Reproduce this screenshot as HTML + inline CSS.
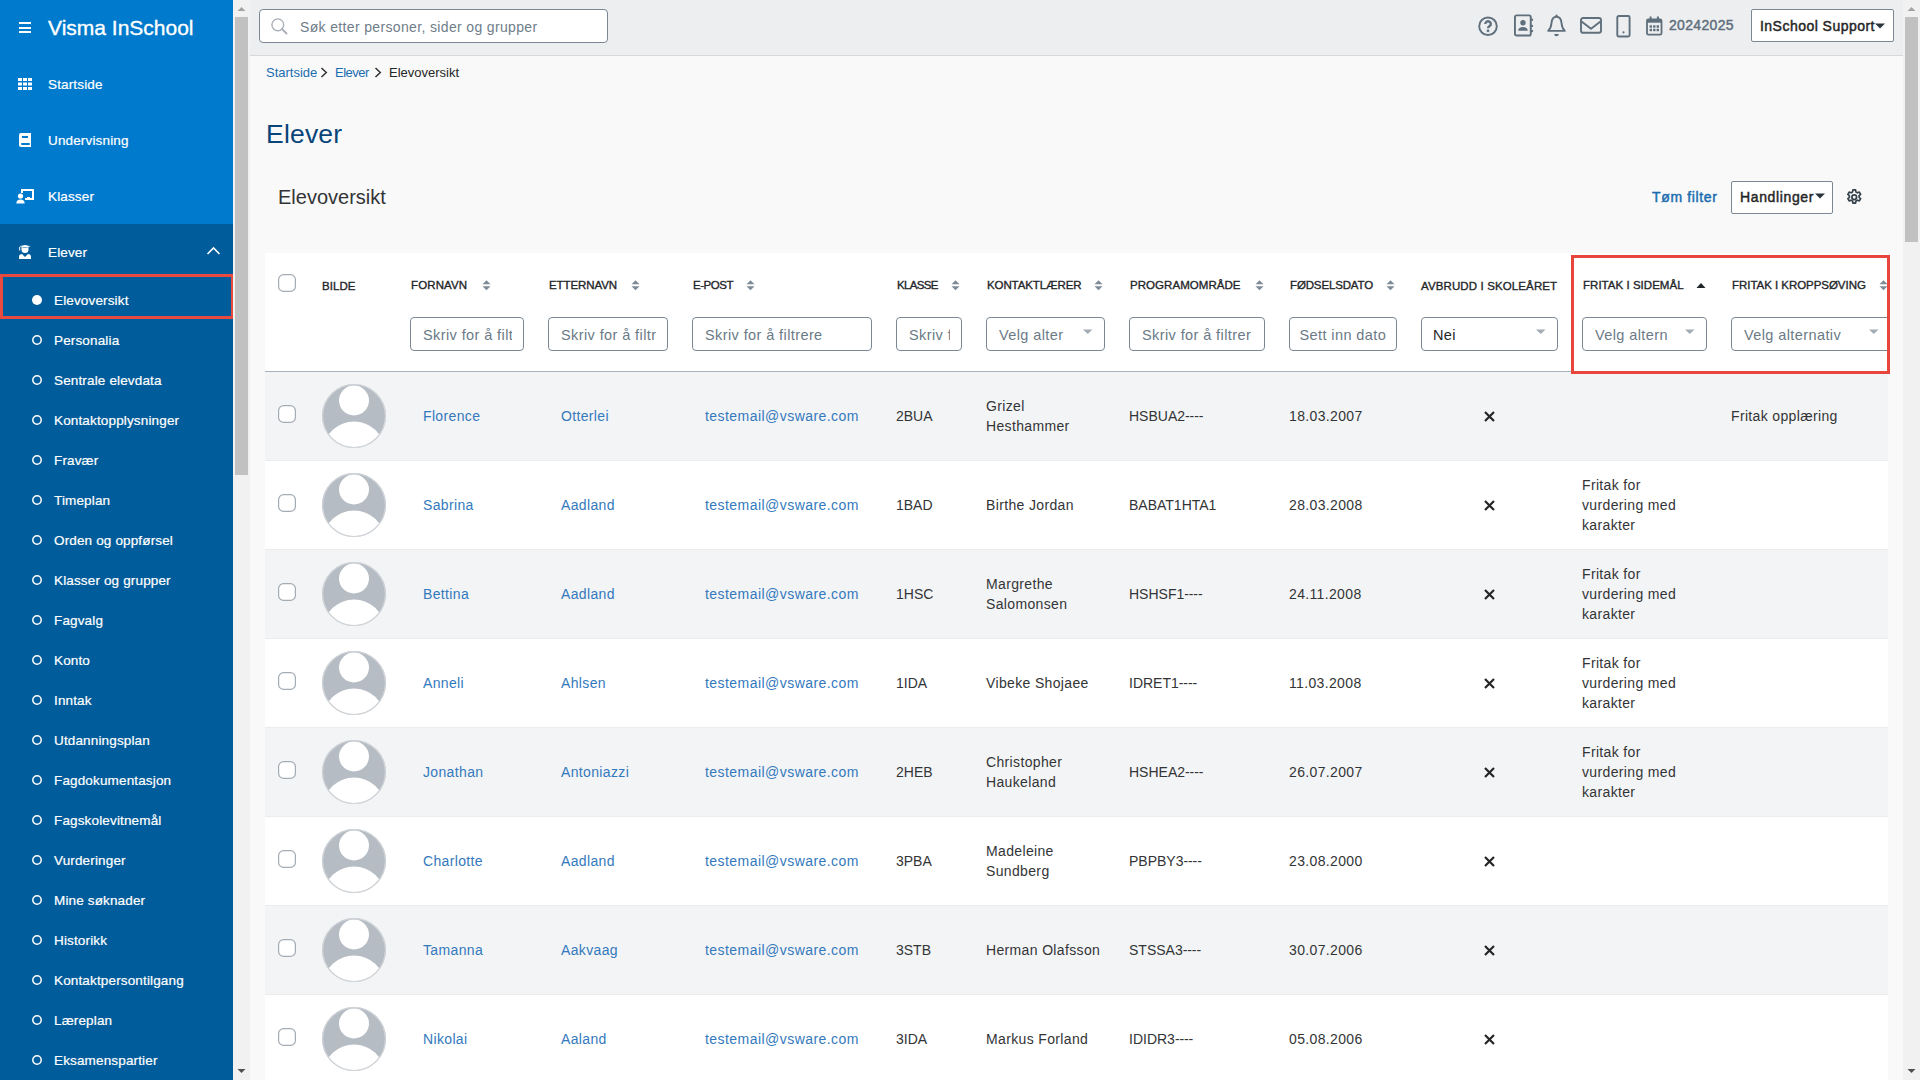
<!DOCTYPE html><html><head><meta charset="utf-8"><style>
*{margin:0;padding:0;box-sizing:border-box}
html,body{width:1920px;height:1080px;overflow:hidden;background:#f9f9f9;font-family:"Liberation Sans", sans-serif}
.t{position:absolute;white-space:nowrap;line-height:1}
.r{position:absolute}
svg{position:absolute;overflow:visible}
</style></head><body>
<div class="r" style="left:0px;top:0px;width:233px;height:224px;background:#007acc"></div>
<div class="r" style="left:0px;top:224px;width:233px;height:856px;background:#005c9a"></div>
<div class="r" style="left:19px;top:22px;width:12px;height:2px;background:#fff"></div>
<div class="r" style="left:19px;top:26.5px;width:12px;height:2px;background:#fff"></div>
<div class="r" style="left:19px;top:31px;width:12px;height:2px;background:#fff"></div>
<div class="t " style="left:48px;top:17.22px;font-size:21px;color:#fff;-webkit-text-stroke:0.35px #fff;">Visma InSchool</div>
<svg style="left:18px;top:78px" width="14" height="12" viewBox="0 0 14 12">
<g fill="#fff"><rect x="0" y="0" width="4" height="3"/><rect x="5" y="0" width="4" height="3"/><rect x="10" y="0" width="4" height="3"/>
<rect x="0" y="4.5" width="4" height="3"/><rect x="5" y="4.5" width="4" height="3"/><rect x="10" y="4.5" width="4" height="3"/>
<rect x="0" y="9" width="4" height="3"/><rect x="5" y="9" width="4" height="3"/><rect x="10" y="9" width="4" height="3"/></g></svg>
<svg style="left:19px;top:133px" width="12" height="14" viewBox="0 0 12 14">
<path d="M2 0H12V14H2A2 2 0 0 1 0 12V2A2 2 0 0 1 2 0Z" fill="#fff"/>
<rect x="3" y="3" width="6" height="2" fill="#007acc"/><rect x="2" y="10" width="9" height="2" rx="1" fill="#007acc"/></svg>
<svg style="left:16px;top:189px" width="18" height="15" viewBox="0 0 18 15">
<path d="M5 0H18V11H9V9H16V2H7V4H5Z" fill="#fff"/>
<rect x="11" y="8" width="3" height="2" fill="#fff"/>
<circle cx="4.5" cy="7" r="2.6" fill="#fff"/>
<path d="M0.3 14.5C0.3 12 2 10.5 4.5 10.5S8.7 12 8.7 14.5Z" fill="#fff"/></svg>
<svg style="left:19px;top:245px" width="12" height="14" viewBox="0 0 12 14">
<path d="M0 1.3L6 0L12 1.3L6 2.6Z" fill="#fff"/>
<path d="M2.5 2V4.5A3.5 3.5 0 0 0 9.5 4.5V2L6 3Z" fill="#fff"/>
<rect x="0.2" y="2" width="1" height="3.5" fill="#fff"/>
<path d="M0 14V11.5C0 10 1.5 9 3 9L6 12L9 9C10.5 9 12 10 12 11.5V14Z" fill="#fff"/></svg>
<div class="t " style="left:48px;top:77.57px;font-size:13.5px;color:#fff;-webkit-text-stroke:0.2px #fff;letter-spacing:0.15px;">Startside</div>
<div class="t " style="left:48px;top:133.57px;font-size:13.5px;color:#fff;-webkit-text-stroke:0.2px #fff;letter-spacing:0.15px;">Undervisning</div>
<div class="t " style="left:48px;top:189.57px;font-size:13.5px;color:#fff;-webkit-text-stroke:0.2px #fff;letter-spacing:0.15px;">Klasser</div>
<div class="t " style="left:48px;top:245.57px;font-size:13.5px;color:#fff;-webkit-text-stroke:0.2px #fff;letter-spacing:0.15px;">Elever</div>
<svg style="left:206px;top:246px" width="15" height="10" viewBox="0 0 15 10"><path d="M1.5 8L7.5 2L13.5 8" fill="none" stroke="#fff" stroke-width="1.6"/></svg>
<svg style="left:32px;top:295px" width="10" height="10"><circle cx="5" cy="5" r="5" fill="#fff"/></svg>
<div class="t " style="left:54px;top:293.57px;font-size:13.5px;color:#fff;-webkit-text-stroke:0.2px #fff;letter-spacing:0.15px;">Elevoversikt</div>
<svg style="left:32px;top:335px" width="10" height="10"><circle cx="5" cy="5" r="4.2" fill="none" stroke="#fff" stroke-width="1.5"/></svg>
<div class="t " style="left:54px;top:333.57px;font-size:13.5px;color:#fff;-webkit-text-stroke:0.2px #fff;letter-spacing:0.15px;">Personalia</div>
<svg style="left:32px;top:375px" width="10" height="10"><circle cx="5" cy="5" r="4.2" fill="none" stroke="#fff" stroke-width="1.5"/></svg>
<div class="t " style="left:54px;top:373.57px;font-size:13.5px;color:#fff;-webkit-text-stroke:0.2px #fff;letter-spacing:0.15px;">Sentrale elevdata</div>
<svg style="left:32px;top:415px" width="10" height="10"><circle cx="5" cy="5" r="4.2" fill="none" stroke="#fff" stroke-width="1.5"/></svg>
<div class="t " style="left:54px;top:413.57px;font-size:13.5px;color:#fff;-webkit-text-stroke:0.2px #fff;letter-spacing:0.15px;">Kontaktopplysninger</div>
<svg style="left:32px;top:455px" width="10" height="10"><circle cx="5" cy="5" r="4.2" fill="none" stroke="#fff" stroke-width="1.5"/></svg>
<div class="t " style="left:54px;top:453.57px;font-size:13.5px;color:#fff;-webkit-text-stroke:0.2px #fff;letter-spacing:0.15px;">Fravær</div>
<svg style="left:32px;top:495px" width="10" height="10"><circle cx="5" cy="5" r="4.2" fill="none" stroke="#fff" stroke-width="1.5"/></svg>
<div class="t " style="left:54px;top:493.57px;font-size:13.5px;color:#fff;-webkit-text-stroke:0.2px #fff;letter-spacing:0.15px;">Timeplan</div>
<svg style="left:32px;top:535px" width="10" height="10"><circle cx="5" cy="5" r="4.2" fill="none" stroke="#fff" stroke-width="1.5"/></svg>
<div class="t " style="left:54px;top:533.57px;font-size:13.5px;color:#fff;-webkit-text-stroke:0.2px #fff;letter-spacing:0.15px;">Orden og oppførsel</div>
<svg style="left:32px;top:575px" width="10" height="10"><circle cx="5" cy="5" r="4.2" fill="none" stroke="#fff" stroke-width="1.5"/></svg>
<div class="t " style="left:54px;top:573.57px;font-size:13.5px;color:#fff;-webkit-text-stroke:0.2px #fff;letter-spacing:0.15px;">Klasser og grupper</div>
<svg style="left:32px;top:615px" width="10" height="10"><circle cx="5" cy="5" r="4.2" fill="none" stroke="#fff" stroke-width="1.5"/></svg>
<div class="t " style="left:54px;top:613.57px;font-size:13.5px;color:#fff;-webkit-text-stroke:0.2px #fff;letter-spacing:0.15px;">Fagvalg</div>
<svg style="left:32px;top:655px" width="10" height="10"><circle cx="5" cy="5" r="4.2" fill="none" stroke="#fff" stroke-width="1.5"/></svg>
<div class="t " style="left:54px;top:653.57px;font-size:13.5px;color:#fff;-webkit-text-stroke:0.2px #fff;letter-spacing:0.15px;">Konto</div>
<svg style="left:32px;top:695px" width="10" height="10"><circle cx="5" cy="5" r="4.2" fill="none" stroke="#fff" stroke-width="1.5"/></svg>
<div class="t " style="left:54px;top:693.57px;font-size:13.5px;color:#fff;-webkit-text-stroke:0.2px #fff;letter-spacing:0.15px;">Inntak</div>
<svg style="left:32px;top:735px" width="10" height="10"><circle cx="5" cy="5" r="4.2" fill="none" stroke="#fff" stroke-width="1.5"/></svg>
<div class="t " style="left:54px;top:733.57px;font-size:13.5px;color:#fff;-webkit-text-stroke:0.2px #fff;letter-spacing:0.15px;">Utdanningsplan</div>
<svg style="left:32px;top:775px" width="10" height="10"><circle cx="5" cy="5" r="4.2" fill="none" stroke="#fff" stroke-width="1.5"/></svg>
<div class="t " style="left:54px;top:773.57px;font-size:13.5px;color:#fff;-webkit-text-stroke:0.2px #fff;letter-spacing:0.15px;">Fagdokumentasjon</div>
<svg style="left:32px;top:815px" width="10" height="10"><circle cx="5" cy="5" r="4.2" fill="none" stroke="#fff" stroke-width="1.5"/></svg>
<div class="t " style="left:54px;top:813.57px;font-size:13.5px;color:#fff;-webkit-text-stroke:0.2px #fff;letter-spacing:0.15px;">Fagskolevitnemål</div>
<svg style="left:32px;top:855px" width="10" height="10"><circle cx="5" cy="5" r="4.2" fill="none" stroke="#fff" stroke-width="1.5"/></svg>
<div class="t " style="left:54px;top:853.57px;font-size:13.5px;color:#fff;-webkit-text-stroke:0.2px #fff;letter-spacing:0.15px;">Vurderinger</div>
<svg style="left:32px;top:895px" width="10" height="10"><circle cx="5" cy="5" r="4.2" fill="none" stroke="#fff" stroke-width="1.5"/></svg>
<div class="t " style="left:54px;top:893.57px;font-size:13.5px;color:#fff;-webkit-text-stroke:0.2px #fff;letter-spacing:0.15px;">Mine søknader</div>
<svg style="left:32px;top:935px" width="10" height="10"><circle cx="5" cy="5" r="4.2" fill="none" stroke="#fff" stroke-width="1.5"/></svg>
<div class="t " style="left:54px;top:933.57px;font-size:13.5px;color:#fff;-webkit-text-stroke:0.2px #fff;letter-spacing:0.15px;">Historikk</div>
<svg style="left:32px;top:975px" width="10" height="10"><circle cx="5" cy="5" r="4.2" fill="none" stroke="#fff" stroke-width="1.5"/></svg>
<div class="t " style="left:54px;top:973.57px;font-size:13.5px;color:#fff;-webkit-text-stroke:0.2px #fff;letter-spacing:0.15px;">Kontaktpersontilgang</div>
<svg style="left:32px;top:1015px" width="10" height="10"><circle cx="5" cy="5" r="4.2" fill="none" stroke="#fff" stroke-width="1.5"/></svg>
<div class="t " style="left:54px;top:1013.57px;font-size:13.5px;color:#fff;-webkit-text-stroke:0.2px #fff;letter-spacing:0.15px;">Læreplan</div>
<svg style="left:32px;top:1055px" width="10" height="10"><circle cx="5" cy="5" r="4.2" fill="none" stroke="#fff" stroke-width="1.5"/></svg>
<div class="t " style="left:54px;top:1053.57px;font-size:13.5px;color:#fff;-webkit-text-stroke:0.2px #fff;letter-spacing:0.15px;">Eksamenspartier</div>
<div class="r" style="left:0px;top:274px;width:234px;height:45px;border:3px solid #e84a3f"></div>
<div class="r" style="left:233px;top:0px;width:17px;height:1080px;background:#f1f1f1"></div>
<div class="r" style="left:235px;top:17px;width:13px;height:458px;background:#c1c1c1"></div>
<svg style="left:233px;top:0" width="17" height="17"><path d="M4.5 11L8.5 7L12.5 11Z" fill="#a3a3a3"/></svg>
<svg style="left:233px;top:1063px" width="17" height="17"><path d="M4.5 6L8.5 10L12.5 6Z" fill="#505050"/></svg>
<div class="r" style="left:1903px;top:0px;width:17px;height:1080px;background:#f1f1f1"></div>
<div class="r" style="left:1905px;top:17px;width:13px;height:225px;background:#c1c1c1"></div>
<svg style="left:1903px;top:0" width="17" height="17"><path d="M4.5 11L8.5 7L12.5 11Z" fill="#a3a3a3"/></svg>
<svg style="left:1903px;top:1063px" width="17" height="17"><path d="M4.5 6L8.5 10L12.5 6Z" fill="#505050"/></svg>
<div class="r" style="left:250px;top:0px;width:1653px;height:56px;background:#eceef0;border-bottom:1px solid #d5d9dc"></div>
<div class="r" style="left:259px;top:9px;width:349px;height:34px;background:#fff;border:1px solid #7b8894;border-radius:4px"></div>
<svg style="left:271px;top:17.5px" width="18" height="18" viewBox="0 0 18 18"><circle cx="6.8" cy="6.8" r="5.9" fill="none" stroke="#a9b0b7" stroke-width="1.4"/><path d="M11 11L15.5 15.5" stroke="#a9b0b7" stroke-width="1.9" stroke-linecap="round"/></svg>
<div class="t " style="left:300px;top:20.15px;font-size:14px;color:#6f7d89;letter-spacing:0.35px;">Søk etter personer, sider og grupper</div>
<svg style="left:1477px;top:16px" width="22" height="21" viewBox="0 0 22 21"><circle cx="11" cy="10.25" r="8.8" fill="none" stroke="#5f6f7c" stroke-width="1.9"/><path d="M8.3 8A2.75 2.6 0 1 1 12.6 10.1C11.6 10.8 11 11.1 11 12.3" fill="none" stroke="#5f6f7c" stroke-width="2.4"/><circle cx="11" cy="14.8" r="1.4" fill="#5f6f7c"/></svg>
<svg style="left:1513px;top:14px" width="22" height="23" viewBox="0 0 22 23"><rect x="1.95" y="1.35" width="15.8" height="20.2" rx="1.6" fill="none" stroke="#5f6f7c" stroke-width="1.9"/><circle cx="10" cy="8.8" r="2.7" fill="#5f6f7c"/><path d="M5.2 16.8C5.2 14.2 7 13.1 10 13.1S14.8 14.2 14.8 16.8Z" fill="#5f6f7c"/><circle cx="18.9" cy="5.7" r="1.2" fill="#5f6f7c"/><circle cx="18.9" cy="11.9" r="1.2" fill="#5f6f7c"/><circle cx="18.9" cy="17" r="1.2" fill="#5f6f7c"/></svg>
<svg style="left:1546px;top:14px" width="21" height="23" viewBox="0 0 21 23"><path d="M10.5 2.8C7 2.8 5.8 6 5.5 9C5.2 12.5 4.8 14.5 2.2 16.9H18.8C16.2 14.5 15.8 12.5 15.5 9C15.2 6 14 2.8 10.5 2.8Z" fill="none" stroke="#5f6f7c" stroke-width="1.9" stroke-linejoin="round"/><circle cx="10.5" cy="1.6" r="1.1" fill="#5f6f7c"/><path d="M8.2 20H12.8A2.3 2.3 0 0 1 8.2 20Z" fill="#5f6f7c"/></svg>
<svg style="left:1580px;top:17px" width="23" height="18" viewBox="0 0 23 18"><rect x="1" y="1" width="20" height="14.8" rx="2" fill="none" stroke="#5f6f7c" stroke-width="1.9"/><path d="M1.5 4.6L11 11.8L20.5 4.6" fill="none" stroke="#5f6f7c" stroke-width="1.9" stroke-linejoin="round"/></svg>
<svg style="left:1615.5px;top:14.5px" width="16" height="23" viewBox="0 0 16 23"><rect x="1.3" y="1" width="12.3" height="20.5" rx="1.5" fill="none" stroke="#5f6f7c" stroke-width="1.9"/><circle cx="7.5" cy="17.3" r="1.1" fill="#5f6f7c"/></svg>
<svg style="left:1645.5px;top:15.5px" width="18" height="21" viewBox="0 0 18 21"><rect x="1" y="3.3" width="14.5" height="15.4" rx="1.4" fill="none" stroke="#5f6f7c" stroke-width="1.8"/><rect x="1" y="3.3" width="14.5" height="3.4" fill="#5f6f7c"/><rect x="3.6" y="0.5" width="2" height="3.5" fill="#5f6f7c"/><rect x="10.9" y="0.5" width="2" height="3.5" fill="#5f6f7c"/><g fill="#5f6f7c"><rect x="3.6" y="9.3" width="2.4" height="2.4"/><rect x="7.1" y="9.3" width="2.4" height="2.4"/><rect x="10.6" y="9.3" width="2.4" height="2.4"/><rect x="3.6" y="12.8" width="2.4" height="2.4"/><rect x="7.1" y="12.8" width="2.4" height="2.4"/><rect x="10.6" y="12.8" width="2.4" height="2.4"/></g></svg>
<div class="t " style="left:1669px;top:18.15px;font-size:14px;color:#5f6f7c;-webkit-text-stroke:0.45px #5f6f7c;letter-spacing:0.32px;">20242025</div>
<div class="r" style="left:1751px;top:9px;width:143px;height:33px;background:#fff;border:1px solid #7b8894;border-radius:2px"></div>
<div class="t " style="left:1760px;top:19.15px;font-size:14px;color:#252626;-webkit-text-stroke:0.45px #252626;letter-spacing:0.47px;">InSchool Support</div>
<svg style="left:1875px;top:23px" width="11" height="7"><path d="M0 0.5H10L5 5.5Z" fill="#2b333b"/></svg>
<div class="t " style="left:266px;top:66.00px;font-size:13px;color:#1a6cb0;">Startside</div>
<svg style="left:320px;top:67px" width="8" height="11"><path d="M1.5 1L6.3 5.5L1.5 10" fill="none" stroke="#333" stroke-width="1.5"/></svg>
<div class="t " style="left:335px;top:66.00px;font-size:13px;color:#1a6cb0;letter-spacing:-0.5px;">Elever</div>
<svg style="left:374px;top:67px" width="8" height="11"><path d="M1.5 1L6.3 5.5L1.5 10" fill="none" stroke="#333" stroke-width="1.5"/></svg>
<div class="t " style="left:389px;top:66.00px;font-size:13px;color:#252626;">Elevoversikt</div>
<div class="t " style="left:266px;top:120.57px;font-size:26.5px;color:#0a4579;letter-spacing:0.2px;">Elever</div>
<div class="t " style="left:278px;top:187.07px;font-size:20px;color:#333436;">Elevoversikt</div>
<div class="t " style="left:1652px;top:190.15px;font-size:14px;color:#1a6cb0;-webkit-text-stroke:0.45px #1a6cb0;letter-spacing:0.64px;">Tøm filter</div>
<div class="r" style="left:1731px;top:181px;width:102px;height:33px;background:#fff;border:1px solid #7b8894;border-radius:2px"></div>
<div class="t " style="left:1740px;top:190.15px;font-size:14px;color:#252626;-webkit-text-stroke:0.45px #252626;letter-spacing:0.63px;">Handlinger</div>
<svg style="left:1815px;top:193px" width="11" height="7"><path d="M0 0.5H10L5 5.5Z" fill="#2b333b"/></svg>
<svg style="left:1844.5px;top:188.3px" width="18.5" height="18.5" viewBox="0 0 24 24"><path fill="none" stroke="#34404a" stroke-width="2.2" stroke-linejoin="round" d="M10.3 2.5h3.4l.5 2.6a7.5 7.5 0 0 1 1.9 1.1l2.5-.9 1.7 2.9-2 1.7a7.5 7.5 0 0 1 0 2.2l2 1.7-1.7 2.9-2.5-.9a7.5 7.5 0 0 1-1.9 1.1l-.5 2.6h-3.4l-.5-2.6a7.5 7.5 0 0 1-1.9-1.1l-2.5.9-1.7-2.9 2-1.7a7.5 7.5 0 0 1 0-2.2l-2-1.7 1.7-2.9 2.5.9a7.5 7.5 0 0 1 1.9-1.1z"/><circle cx="12" cy="12" r="3" fill="none" stroke="#34404a" stroke-width="2.2"/></svg>
<div class="r" style="left:265px;top:253px;width:1623px;height:827px;background:#fff;overflow:hidden">
<div class="r" style="left:0px;top:118px;width:1623px;height:1px;background:#a9b1b9"></div>
<svg style="left:13px;top:21px" width="18" height="18"><rect x="0.6" y="0.6" width="16.8" height="16.8" rx="5" fill="#fff" stroke="#a3abb3" stroke-width="1.2"/></svg>
<div class="t " style="left:57px;top:27.57px;font-size:11.5px;color:#1f2629;-webkit-text-stroke:0.35px #1f2629;letter-spacing:0.07px;">BILDE</div>
<div class="t " style="left:146px;top:26.77px;font-size:11.5px;color:#1f2629;-webkit-text-stroke:0.35px #1f2629;letter-spacing:0.12px;">FORNAVN</div>
<svg style="left:216.5px;top:27px" width="9" height="11"><path d="M0.5 4.3L4.5 0.3L8.5 4.3Z M0.5 6.2L4.5 10.2L8.5 6.2Z" fill="#7e8b96"/></svg>
<div class="t " style="left:284px;top:26.77px;font-size:11.5px;color:#1f2629;-webkit-text-stroke:0.35px #1f2629;letter-spacing:-0.09px;">ETTERNAVN</div>
<svg style="left:365.5px;top:27px" width="9" height="11"><path d="M0.5 4.3L4.5 0.3L8.5 4.3Z M0.5 6.2L4.5 10.2L8.5 6.2Z" fill="#7e8b96"/></svg>
<div class="t " style="left:428px;top:26.77px;font-size:11.5px;color:#1f2629;-webkit-text-stroke:0.35px #1f2629;letter-spacing:-0.45px;">E-POST</div>
<svg style="left:480.5px;top:27px" width="9" height="11"><path d="M0.5 4.3L4.5 0.3L8.5 4.3Z M0.5 6.2L4.5 10.2L8.5 6.2Z" fill="#7e8b96"/></svg>
<div class="t " style="left:632px;top:26.77px;font-size:11.5px;color:#1f2629;-webkit-text-stroke:0.35px #1f2629;letter-spacing:-0.65px;">KLASSE</div>
<svg style="left:685.5px;top:27px" width="9" height="11"><path d="M0.5 4.3L4.5 0.3L8.5 4.3Z M0.5 6.2L4.5 10.2L8.5 6.2Z" fill="#7e8b96"/></svg>
<div class="t " style="left:722px;top:26.77px;font-size:11.5px;color:#1f2629;-webkit-text-stroke:0.35px #1f2629;letter-spacing:-0.1px;">KONTAKTLÆRER</div>
<svg style="left:828.5px;top:27px" width="9" height="11"><path d="M0.5 4.3L4.5 0.3L8.5 4.3Z M0.5 6.2L4.5 10.2L8.5 6.2Z" fill="#7e8b96"/></svg>
<div class="t " style="left:865px;top:26.77px;font-size:11.5px;color:#1f2629;-webkit-text-stroke:0.35px #1f2629;letter-spacing:0.05px;">PROGRAMOMRÅDE</div>
<svg style="left:989.5px;top:27px" width="9" height="11"><path d="M0.5 4.3L4.5 0.3L8.5 4.3Z M0.5 6.2L4.5 10.2L8.5 6.2Z" fill="#7e8b96"/></svg>
<div class="t " style="left:1025px;top:26.77px;font-size:11.5px;color:#1f2629;-webkit-text-stroke:0.35px #1f2629;letter-spacing:-0.14px;">FØDSELSDATO</div>
<svg style="left:1120.5px;top:27px" width="9" height="11"><path d="M0.5 4.3L4.5 0.3L8.5 4.3Z M0.5 6.2L4.5 10.2L8.5 6.2Z" fill="#7e8b96"/></svg>
<div class="t " style="left:1156px;top:27.57px;font-size:11.5px;color:#1f2629;-webkit-text-stroke:0.35px #1f2629;letter-spacing:0.12px;">AVBRUDD I SKOLEÅRET</div>
<div class="t " style="left:1318px;top:26.77px;font-size:11.5px;color:#1f2629;-webkit-text-stroke:0.35px #1f2629;letter-spacing:0.03px;">FRITAK I SIDEMÅL</div>
<svg style="left:1431px;top:29px" width="10" height="7"><path d="M0.5 6H9.5L5 1Z" fill="#1f2629"/></svg>
<div class="t " style="left:1467px;top:26.77px;font-size:11.5px;color:#1f2629;-webkit-text-stroke:0.35px #1f2629;letter-spacing:-0.04px;">FRITAK I KROPPSØVING</div>
<svg style="left:1614px;top:27px" width="9" height="11"><path d="M0.5 4.3L4.5 0.3L8.5 4.3Z M0.5 6.2L4.5 10.2L8.5 6.2Z" fill="#7e8b96"/></svg>
<div class="r" style="left:145px;top:64px;width:114px;height:34px;background:#fff;border:1px solid #7b8894;border-radius:4px"></div>
<div class="r" style="left:158px;top:64px;width:88.5px;height:34px;overflow:hidden">
<div class="t " style="left:0px;top:10.73px;font-size:14.5px;color:#6b7a86;letter-spacing:0.4px;">Skriv for å filt</div>
</div>
<div class="r" style="left:283px;top:64px;width:120px;height:34px;background:#fff;border:1px solid #7b8894;border-radius:4px"></div>
<div class="r" style="left:296px;top:64px;width:94.5px;height:34px;overflow:hidden">
<div class="t " style="left:0px;top:10.73px;font-size:14.5px;color:#6b7a86;letter-spacing:0.4px;">Skriv for å filtr</div>
</div>
<div class="r" style="left:427px;top:64px;width:180px;height:34px;background:#fff;border:1px solid #7b8894;border-radius:4px"></div>
<div class="r" style="left:440px;top:64px;width:159px;height:34px;overflow:hidden">
<div class="t " style="left:0px;top:10.73px;font-size:14.5px;color:#6b7a86;letter-spacing:0.4px;">Skriv for å filtrere</div>
</div>
<div class="r" style="left:631px;top:64px;width:66px;height:34px;background:#fff;border:1px solid #7b8894;border-radius:4px"></div>
<div class="r" style="left:644px;top:64px;width:40.5px;height:34px;overflow:hidden">
<div class="t " style="left:0px;top:10.73px;font-size:14.5px;color:#6b7a86;letter-spacing:0.4px;">Skriv f</div>
</div>
<div class="r" style="left:721px;top:64px;width:119px;height:34px;background:#fff;border:1px solid #7b8894;border-radius:4px"></div>
<div class="r" style="left:734px;top:64px;width:65px;height:34px;overflow:hidden">
<div class="t " style="left:0px;top:10.73px;font-size:14.5px;color:#6b7a86;letter-spacing:0.4px;">Velg altern</div>
</div>
<svg style="left:818px;top:76px" width="10" height="6"><path d="M0 0.5H9.5L4.75 5Z" fill="#a3acb4"/></svg>
<div class="r" style="left:864px;top:64px;width:136px;height:34px;background:#fff;border:1px solid #7b8894;border-radius:4px"></div>
<div class="r" style="left:877px;top:64px;width:115px;height:34px;overflow:hidden">
<div class="t " style="left:0px;top:10.73px;font-size:14.5px;color:#6b7a86;letter-spacing:0.4px;">Skriv for å filtrer</div>
</div>
<div class="r" style="left:1024px;top:64px;width:108px;height:34px;background:#fff;border:1px solid #7b8894;border-radius:4px"></div>
<div class="r" style="left:1034.5px;top:64px;width:89.5px;height:34px;overflow:hidden">
<div class="t " style="left:0px;top:10.73px;font-size:14.5px;color:#6b7a86;letter-spacing:0.4px;">Sett inn dato</div>
</div>
<div class="r" style="left:1156px;top:64px;width:137px;height:34px;background:#fff;border:1px solid #7b8894;border-radius:4px"></div>
<div class="r" style="left:1168px;top:64px;width:117px;height:34px;overflow:hidden">
<div class="t " style="left:0px;top:10.73px;font-size:14.5px;color:#252626;letter-spacing:0.4px;">Nei</div>
</div>
<svg style="left:1271px;top:76px" width="10" height="6"><path d="M0 0.5H9.5L4.75 5Z" fill="#a3acb4"/></svg>
<div class="r" style="left:1317px;top:64px;width:125px;height:34px;background:#fff;border:1px solid #7b8894;border-radius:4px"></div>
<div class="r" style="left:1330px;top:64px;width:104px;height:34px;overflow:hidden">
<div class="t " style="left:0px;top:10.73px;font-size:14.5px;color:#6b7a86;letter-spacing:0.4px;">Velg altern</div>
</div>
<svg style="left:1420px;top:76px" width="10" height="6"><path d="M0 0.5H9.5L4.75 5Z" fill="#a3acb4"/></svg>
<div class="r" style="left:1466px;top:64px;width:160px;height:34px;background:#fff;border:1px solid #7b8894;border-radius:4px"></div>
<div class="r" style="left:1479px;top:64px;width:139px;height:34px;overflow:hidden">
<div class="t " style="left:0px;top:10.73px;font-size:14.5px;color:#6b7a86;letter-spacing:0.4px;">Velg alternativ</div>
</div>
<svg style="left:1604px;top:76px" width="10" height="6"><path d="M0 0.5H9.5L4.75 5Z" fill="#a3acb4"/></svg>
<div class="r" style="left:0px;top:119px;width:1623px;height:88px;background:#f3f4f6"></div>
<div class="r" style="left:0px;top:207px;width:1623px;height:1px;background:#ececec"></div>
<svg style="left:13px;top:152px" width="18" height="18"><rect x="0.6" y="0.6" width="16.8" height="16.8" rx="5" fill="#fff" stroke="#a3abb3" stroke-width="1.2"/></svg>
<svg style="left:57px;top:131px" width="64" height="64"><defs><clipPath id="avc"><circle cx="32" cy="32" r="31.5"/></clipPath></defs>
<circle cx="32" cy="32" r="31.5" fill="#b5bcc3" stroke="#d0d4d8" stroke-width="1"/>
<circle cx="32" cy="16.5" r="15" fill="#fff"/>
<g clip-path="url(#avc)"><ellipse cx="32" cy="65.5" rx="30" ry="28" fill="#fff"/></g>
<circle cx="32" cy="32" r="31.5" fill="none" stroke="#cfd3d7" stroke-width="1.2"/></svg>
<div class="t " style="left:158px;top:156.15px;font-size:14px;color:#3479bd;letter-spacing:0.35px;">Florence</div>
<div class="t " style="left:296px;top:156.15px;font-size:14px;color:#3479bd;letter-spacing:0.35px;">Otterlei</div>
<div class="t " style="left:440px;top:156.15px;font-size:14px;color:#3479bd;letter-spacing:0.45px;">testemail@vsware.com</div>
<div class="t " style="left:631px;top:156.15px;font-size:14px;color:#333436;">2BUA</div>
<div class="t " style="left:721px;top:146.15px;font-size:14px;color:#333436;letter-spacing:0.35px;">Grizel</div>
<div class="t " style="left:721px;top:166.15px;font-size:14px;color:#333436;letter-spacing:0.35px;">Hesthammer</div>
<div class="t " style="left:864px;top:156.15px;font-size:14px;color:#333436;">HSBUA2<span style="letter-spacing:-0.1px">----</span></div>
<div class="t " style="left:1024px;top:156.15px;font-size:14px;color:#333436;letter-spacing:0.35px;">18.03.2007</div>
<svg style="left:1219px;top:158px" width="11" height="11"><path d="M1 1L10 10M10 1L1 10" stroke="#252626" stroke-width="2.2"/></svg>
<div class="t " style="left:1466px;top:156.15px;font-size:14px;color:#333436;letter-spacing:0.35px;">Fritak opplæring</div>
<div class="r" style="left:0px;top:296px;width:1623px;height:1px;background:#ececec"></div>
<svg style="left:13px;top:241px" width="18" height="18"><rect x="0.6" y="0.6" width="16.8" height="16.8" rx="5" fill="#fff" stroke="#a3abb3" stroke-width="1.2"/></svg>
<svg style="left:57px;top:220px" width="64" height="64"><defs><clipPath id="avc"><circle cx="32" cy="32" r="31.5"/></clipPath></defs>
<circle cx="32" cy="32" r="31.5" fill="#b5bcc3" stroke="#d0d4d8" stroke-width="1"/>
<circle cx="32" cy="16.5" r="15" fill="#fff"/>
<g clip-path="url(#avc)"><ellipse cx="32" cy="65.5" rx="30" ry="28" fill="#fff"/></g>
<circle cx="32" cy="32" r="31.5" fill="none" stroke="#cfd3d7" stroke-width="1.2"/></svg>
<div class="t " style="left:158px;top:245.15px;font-size:14px;color:#3479bd;letter-spacing:0.35px;">Sabrina</div>
<div class="t " style="left:296px;top:245.15px;font-size:14px;color:#3479bd;letter-spacing:0.35px;">Aadland</div>
<div class="t " style="left:440px;top:245.15px;font-size:14px;color:#3479bd;letter-spacing:0.45px;">testemail@vsware.com</div>
<div class="t " style="left:631px;top:245.15px;font-size:14px;color:#333436;">1BAD</div>
<div class="t " style="left:721px;top:245.15px;font-size:14px;color:#333436;letter-spacing:0.35px;">Birthe Jordan</div>
<div class="t " style="left:864px;top:245.15px;font-size:14px;color:#333436;">BABAT1HTA1</div>
<div class="t " style="left:1024px;top:245.15px;font-size:14px;color:#333436;letter-spacing:0.35px;">28.03.2008</div>
<svg style="left:1219px;top:247px" width="11" height="11"><path d="M1 1L10 10M10 1L1 10" stroke="#252626" stroke-width="2.2"/></svg>
<div class="t " style="left:1317px;top:225.15px;font-size:14px;color:#333436;letter-spacing:0.35px;">Fritak for</div>
<div class="t " style="left:1317px;top:245.15px;font-size:14px;color:#333436;letter-spacing:0.35px;">vurdering med</div>
<div class="t " style="left:1317px;top:265.15px;font-size:14px;color:#333436;letter-spacing:0.35px;">karakter</div>
<div class="r" style="left:0px;top:297px;width:1623px;height:88px;background:#f3f4f6"></div>
<div class="r" style="left:0px;top:385px;width:1623px;height:1px;background:#ececec"></div>
<svg style="left:13px;top:330px" width="18" height="18"><rect x="0.6" y="0.6" width="16.8" height="16.8" rx="5" fill="#fff" stroke="#a3abb3" stroke-width="1.2"/></svg>
<svg style="left:57px;top:309px" width="64" height="64"><defs><clipPath id="avc"><circle cx="32" cy="32" r="31.5"/></clipPath></defs>
<circle cx="32" cy="32" r="31.5" fill="#b5bcc3" stroke="#d0d4d8" stroke-width="1"/>
<circle cx="32" cy="16.5" r="15" fill="#fff"/>
<g clip-path="url(#avc)"><ellipse cx="32" cy="65.5" rx="30" ry="28" fill="#fff"/></g>
<circle cx="32" cy="32" r="31.5" fill="none" stroke="#cfd3d7" stroke-width="1.2"/></svg>
<div class="t " style="left:158px;top:334.15px;font-size:14px;color:#3479bd;letter-spacing:0.35px;">Bettina</div>
<div class="t " style="left:296px;top:334.15px;font-size:14px;color:#3479bd;letter-spacing:0.35px;">Aadland</div>
<div class="t " style="left:440px;top:334.15px;font-size:14px;color:#3479bd;letter-spacing:0.45px;">testemail@vsware.com</div>
<div class="t " style="left:631px;top:334.15px;font-size:14px;color:#333436;">1HSC</div>
<div class="t " style="left:721px;top:324.15px;font-size:14px;color:#333436;letter-spacing:0.35px;">Margrethe</div>
<div class="t " style="left:721px;top:344.15px;font-size:14px;color:#333436;letter-spacing:0.35px;">Salomonsen</div>
<div class="t " style="left:864px;top:334.15px;font-size:14px;color:#333436;">HSHSF1<span style="letter-spacing:-0.1px">----</span></div>
<div class="t " style="left:1024px;top:334.15px;font-size:14px;color:#333436;letter-spacing:0.35px;">24.11.2008</div>
<svg style="left:1219px;top:336px" width="11" height="11"><path d="M1 1L10 10M10 1L1 10" stroke="#252626" stroke-width="2.2"/></svg>
<div class="t " style="left:1317px;top:314.15px;font-size:14px;color:#333436;letter-spacing:0.35px;">Fritak for</div>
<div class="t " style="left:1317px;top:334.15px;font-size:14px;color:#333436;letter-spacing:0.35px;">vurdering med</div>
<div class="t " style="left:1317px;top:354.15px;font-size:14px;color:#333436;letter-spacing:0.35px;">karakter</div>
<div class="r" style="left:0px;top:474px;width:1623px;height:1px;background:#ececec"></div>
<svg style="left:13px;top:419px" width="18" height="18"><rect x="0.6" y="0.6" width="16.8" height="16.8" rx="5" fill="#fff" stroke="#a3abb3" stroke-width="1.2"/></svg>
<svg style="left:57px;top:398px" width="64" height="64"><defs><clipPath id="avc"><circle cx="32" cy="32" r="31.5"/></clipPath></defs>
<circle cx="32" cy="32" r="31.5" fill="#b5bcc3" stroke="#d0d4d8" stroke-width="1"/>
<circle cx="32" cy="16.5" r="15" fill="#fff"/>
<g clip-path="url(#avc)"><ellipse cx="32" cy="65.5" rx="30" ry="28" fill="#fff"/></g>
<circle cx="32" cy="32" r="31.5" fill="none" stroke="#cfd3d7" stroke-width="1.2"/></svg>
<div class="t " style="left:158px;top:423.15px;font-size:14px;color:#3479bd;letter-spacing:0.35px;">Anneli</div>
<div class="t " style="left:296px;top:423.15px;font-size:14px;color:#3479bd;letter-spacing:0.35px;">Ahlsen</div>
<div class="t " style="left:440px;top:423.15px;font-size:14px;color:#3479bd;letter-spacing:0.45px;">testemail@vsware.com</div>
<div class="t " style="left:631px;top:423.15px;font-size:14px;color:#333436;">1IDA</div>
<div class="t " style="left:721px;top:423.15px;font-size:14px;color:#333436;letter-spacing:0.35px;">Vibeke Shojaee</div>
<div class="t " style="left:864px;top:423.15px;font-size:14px;color:#333436;">IDRET1<span style="letter-spacing:-0.1px">----</span></div>
<div class="t " style="left:1024px;top:423.15px;font-size:14px;color:#333436;letter-spacing:0.35px;">11.03.2008</div>
<svg style="left:1219px;top:425px" width="11" height="11"><path d="M1 1L10 10M10 1L1 10" stroke="#252626" stroke-width="2.2"/></svg>
<div class="t " style="left:1317px;top:403.15px;font-size:14px;color:#333436;letter-spacing:0.35px;">Fritak for</div>
<div class="t " style="left:1317px;top:423.15px;font-size:14px;color:#333436;letter-spacing:0.35px;">vurdering med</div>
<div class="t " style="left:1317px;top:443.15px;font-size:14px;color:#333436;letter-spacing:0.35px;">karakter</div>
<div class="r" style="left:0px;top:475px;width:1623px;height:88px;background:#f3f4f6"></div>
<div class="r" style="left:0px;top:563px;width:1623px;height:1px;background:#ececec"></div>
<svg style="left:13px;top:508px" width="18" height="18"><rect x="0.6" y="0.6" width="16.8" height="16.8" rx="5" fill="#fff" stroke="#a3abb3" stroke-width="1.2"/></svg>
<svg style="left:57px;top:487px" width="64" height="64"><defs><clipPath id="avc"><circle cx="32" cy="32" r="31.5"/></clipPath></defs>
<circle cx="32" cy="32" r="31.5" fill="#b5bcc3" stroke="#d0d4d8" stroke-width="1"/>
<circle cx="32" cy="16.5" r="15" fill="#fff"/>
<g clip-path="url(#avc)"><ellipse cx="32" cy="65.5" rx="30" ry="28" fill="#fff"/></g>
<circle cx="32" cy="32" r="31.5" fill="none" stroke="#cfd3d7" stroke-width="1.2"/></svg>
<div class="t " style="left:158px;top:512.15px;font-size:14px;color:#3479bd;letter-spacing:0.35px;">Jonathan</div>
<div class="t " style="left:296px;top:512.15px;font-size:14px;color:#3479bd;letter-spacing:0.35px;">Antoniazzi</div>
<div class="t " style="left:440px;top:512.15px;font-size:14px;color:#3479bd;letter-spacing:0.45px;">testemail@vsware.com</div>
<div class="t " style="left:631px;top:512.15px;font-size:14px;color:#333436;">2HEB</div>
<div class="t " style="left:721px;top:502.15px;font-size:14px;color:#333436;letter-spacing:0.35px;">Christopher</div>
<div class="t " style="left:721px;top:522.15px;font-size:14px;color:#333436;letter-spacing:0.35px;">Haukeland</div>
<div class="t " style="left:864px;top:512.15px;font-size:14px;color:#333436;">HSHEA2<span style="letter-spacing:-0.1px">----</span></div>
<div class="t " style="left:1024px;top:512.15px;font-size:14px;color:#333436;letter-spacing:0.35px;">26.07.2007</div>
<svg style="left:1219px;top:514px" width="11" height="11"><path d="M1 1L10 10M10 1L1 10" stroke="#252626" stroke-width="2.2"/></svg>
<div class="t " style="left:1317px;top:492.15px;font-size:14px;color:#333436;letter-spacing:0.35px;">Fritak for</div>
<div class="t " style="left:1317px;top:512.15px;font-size:14px;color:#333436;letter-spacing:0.35px;">vurdering med</div>
<div class="t " style="left:1317px;top:532.15px;font-size:14px;color:#333436;letter-spacing:0.35px;">karakter</div>
<div class="r" style="left:0px;top:652px;width:1623px;height:1px;background:#ececec"></div>
<svg style="left:13px;top:597px" width="18" height="18"><rect x="0.6" y="0.6" width="16.8" height="16.8" rx="5" fill="#fff" stroke="#a3abb3" stroke-width="1.2"/></svg>
<svg style="left:57px;top:576px" width="64" height="64"><defs><clipPath id="avc"><circle cx="32" cy="32" r="31.5"/></clipPath></defs>
<circle cx="32" cy="32" r="31.5" fill="#b5bcc3" stroke="#d0d4d8" stroke-width="1"/>
<circle cx="32" cy="16.5" r="15" fill="#fff"/>
<g clip-path="url(#avc)"><ellipse cx="32" cy="65.5" rx="30" ry="28" fill="#fff"/></g>
<circle cx="32" cy="32" r="31.5" fill="none" stroke="#cfd3d7" stroke-width="1.2"/></svg>
<div class="t " style="left:158px;top:601.15px;font-size:14px;color:#3479bd;letter-spacing:0.35px;">Charlotte</div>
<div class="t " style="left:296px;top:601.15px;font-size:14px;color:#3479bd;letter-spacing:0.35px;">Aadland</div>
<div class="t " style="left:440px;top:601.15px;font-size:14px;color:#3479bd;letter-spacing:0.45px;">testemail@vsware.com</div>
<div class="t " style="left:631px;top:601.15px;font-size:14px;color:#333436;">3PBA</div>
<div class="t " style="left:721px;top:591.15px;font-size:14px;color:#333436;letter-spacing:0.35px;">Madeleine</div>
<div class="t " style="left:721px;top:611.15px;font-size:14px;color:#333436;letter-spacing:0.35px;">Sundberg</div>
<div class="t " style="left:864px;top:601.15px;font-size:14px;color:#333436;">PBPBY3<span style="letter-spacing:-0.1px">----</span></div>
<div class="t " style="left:1024px;top:601.15px;font-size:14px;color:#333436;letter-spacing:0.35px;">23.08.2000</div>
<svg style="left:1219px;top:603px" width="11" height="11"><path d="M1 1L10 10M10 1L1 10" stroke="#252626" stroke-width="2.2"/></svg>
<div class="r" style="left:0px;top:653px;width:1623px;height:88px;background:#f3f4f6"></div>
<div class="r" style="left:0px;top:741px;width:1623px;height:1px;background:#ececec"></div>
<svg style="left:13px;top:686px" width="18" height="18"><rect x="0.6" y="0.6" width="16.8" height="16.8" rx="5" fill="#fff" stroke="#a3abb3" stroke-width="1.2"/></svg>
<svg style="left:57px;top:665px" width="64" height="64"><defs><clipPath id="avc"><circle cx="32" cy="32" r="31.5"/></clipPath></defs>
<circle cx="32" cy="32" r="31.5" fill="#b5bcc3" stroke="#d0d4d8" stroke-width="1"/>
<circle cx="32" cy="16.5" r="15" fill="#fff"/>
<g clip-path="url(#avc)"><ellipse cx="32" cy="65.5" rx="30" ry="28" fill="#fff"/></g>
<circle cx="32" cy="32" r="31.5" fill="none" stroke="#cfd3d7" stroke-width="1.2"/></svg>
<div class="t " style="left:158px;top:690.15px;font-size:14px;color:#3479bd;letter-spacing:0.35px;">Tamanna</div>
<div class="t " style="left:296px;top:690.15px;font-size:14px;color:#3479bd;letter-spacing:0.35px;">Aakvaag</div>
<div class="t " style="left:440px;top:690.15px;font-size:14px;color:#3479bd;letter-spacing:0.45px;">testemail@vsware.com</div>
<div class="t " style="left:631px;top:690.15px;font-size:14px;color:#333436;">3STB</div>
<div class="t " style="left:721px;top:690.15px;font-size:14px;color:#333436;letter-spacing:0.35px;">Herman Olafsson</div>
<div class="t " style="left:864px;top:690.15px;font-size:14px;color:#333436;">STSSA3<span style="letter-spacing:-0.1px">----</span></div>
<div class="t " style="left:1024px;top:690.15px;font-size:14px;color:#333436;letter-spacing:0.35px;">30.07.2006</div>
<svg style="left:1219px;top:692px" width="11" height="11"><path d="M1 1L10 10M10 1L1 10" stroke="#252626" stroke-width="2.2"/></svg>
<div class="r" style="left:0px;top:830px;width:1623px;height:1px;background:#ececec"></div>
<svg style="left:13px;top:775px" width="18" height="18"><rect x="0.6" y="0.6" width="16.8" height="16.8" rx="5" fill="#fff" stroke="#a3abb3" stroke-width="1.2"/></svg>
<svg style="left:57px;top:754px" width="64" height="64"><defs><clipPath id="avc"><circle cx="32" cy="32" r="31.5"/></clipPath></defs>
<circle cx="32" cy="32" r="31.5" fill="#b5bcc3" stroke="#d0d4d8" stroke-width="1"/>
<circle cx="32" cy="16.5" r="15" fill="#fff"/>
<g clip-path="url(#avc)"><ellipse cx="32" cy="65.5" rx="30" ry="28" fill="#fff"/></g>
<circle cx="32" cy="32" r="31.5" fill="none" stroke="#cfd3d7" stroke-width="1.2"/></svg>
<div class="t " style="left:158px;top:779.15px;font-size:14px;color:#3479bd;letter-spacing:0.35px;">Nikolai</div>
<div class="t " style="left:296px;top:779.15px;font-size:14px;color:#3479bd;letter-spacing:0.35px;">Aaland</div>
<div class="t " style="left:440px;top:779.15px;font-size:14px;color:#3479bd;letter-spacing:0.45px;">testemail@vsware.com</div>
<div class="t " style="left:631px;top:779.15px;font-size:14px;color:#333436;">3IDA</div>
<div class="t " style="left:721px;top:779.15px;font-size:14px;color:#333436;letter-spacing:0.35px;">Markus Forland</div>
<div class="t " style="left:864px;top:779.15px;font-size:14px;color:#333436;">IDIDR3<span style="letter-spacing:-0.1px">----</span></div>
<div class="t " style="left:1024px;top:779.15px;font-size:14px;color:#333436;letter-spacing:0.35px;">05.08.2006</div>
<svg style="left:1219px;top:781px" width="11" height="11"><path d="M1 1L10 10M10 1L1 10" stroke="#252626" stroke-width="2.2"/></svg>
</div>
<div class="r" style="left:1571px;top:255px;width:319px;height:119px;border:3px solid #e8453c"></div>
</body></html>
